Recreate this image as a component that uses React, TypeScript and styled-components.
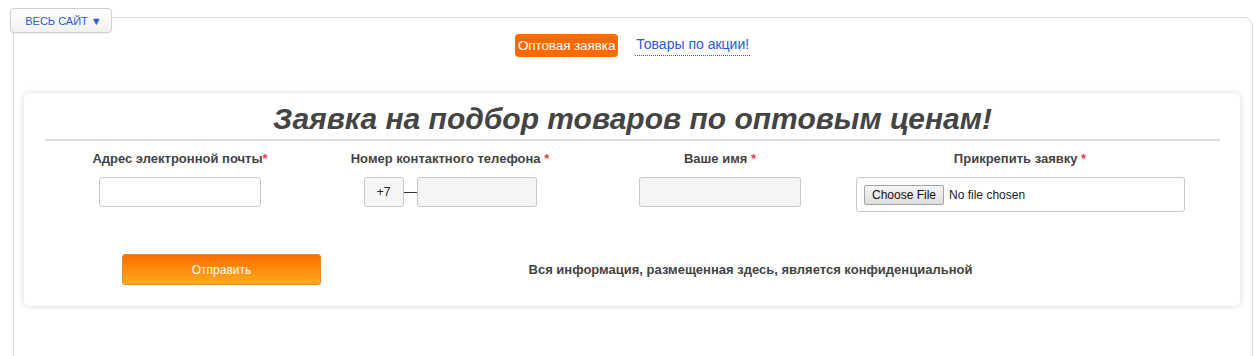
import styled, { createGlobalStyle } from "styled-components";

const Global = createGlobalStyle`
	html, body {
		margin: 0;
		padding: 0;
		background: #ffffff;
	}
	body {
		font-family: "Liberation Sans", Arial, sans-serif;
	}
`;

const Frame = styled.section`
	position: relative;
	margin: 17px 3px 0 13px;
	min-height: 339px;
	border: 1px solid #dcdcdc;
	border-bottom: none;
	border-top-right-radius: 9px;
	padding: 15px 12px 0 10px;
	box-sizing: border-box;
`;

const SiteTab = styled.button`
	position: absolute;
	top: -10px;
	left: -4px;
	width: 102px;
	height: 25px;
	border: 1px solid #cfcfcf;
	border-radius: 4px;
	background: linear-gradient(#ffffff, #f1f1f1);
	box-shadow: 0 1px 1px rgba(0, 0, 0, 0.06);
	color: #2a5bd7;
	font-family: "Liberation Sans", Arial, sans-serif;
	font-size: 11px;
	padding: 0 0 0 5px;
	cursor: pointer;
`;

const Switcher = styled.nav`
	display: flex;
	justify-content: center;
	align-items: center;
	gap: 17px;
	height: 24px;
	padding-left: 1px;
`;

const Pill = styled.span`
	display: inline-block;
	height: 23px;
	line-height: 23px;
	padding: 0 3px;
	border-radius: 4px;
	background: #ff6a00;
	color: #ffffff;
	font-size: 13.5px;
	letter-spacing: -0.1px;
`;

const Link = styled.a`
	color: #2a5bd7;
	font-size: 14px;
	text-decoration: none;
	border-bottom: 1px dotted #2a5bd7;
	padding: 0 1px 3px;
	margin-top: 2px;
	cursor: pointer;
`;

const Card = styled.div`
	margin-top: 36px;
	background: #ffffff;
	border-radius: 5px;
	box-shadow: 0 0 6px rgba(0, 0, 0, 0.16);
	padding: 0 20px 21px 21px;
`;

const Title = styled.h2`
	margin: 0;
	padding: 9px 0 4px;
	line-height: 33px;
	text-align: center;
	font-size: 30px;
	font-weight: 700;
	font-style: italic;
	color: #444444;
	border-bottom: 2px solid #dddddd;
`;

const Fields = styled.div`
	display: grid;
	grid-template-columns: 270px 270px 270px 330px;
	padding-top: 10px;
`;

const Field = styled.div`
	display: flex;
	flex-direction: column;
	align-items: center;
	gap: 10px;
`;

const Label = styled.label`
	font-size: 13px;
	font-weight: 700;
	line-height: 16px;
	color: #444444;
`;

const Star = styled.span`
	color: #f23b3b;
`;

const Input = styled.input<{ $grey?: boolean; $w?: number }>`
	width: ${(p) => p.$w ?? 162}px;
	height: 30px;
	box-sizing: border-box;
	border: 1px solid #c8c8c8;
	border-radius: 3px;
	background: ${(p) => (p.$grey ? "#f5f5f5" : "#ffffff")};
	padding: 0 6px;
	font-family: "Liberation Sans", Arial, sans-serif;
	font-size: 12px;
	outline: none;
`;

const PhoneGroup = styled.div`
	display: flex;
	align-items: center;
`;

const Prefix = styled.span`
	width: 40px;
	height: 30px;
	box-sizing: border-box;
	border: 1px solid #c8c8c8;
	border-radius: 3px;
	background: #f6f6f6;
	font-size: 12px;
	color: #222222;
	display: flex;
	align-items: center;
	justify-content: center;
`;

const Dash = styled.span`
	width: 13px;
	height: 1px;
	background: #333333;
`;

const FileBox = styled.div`
	width: 329px;
	height: 35px;
	box-sizing: border-box;
	border: 1px solid #c8c8c8;
	border-radius: 3px;
	background: #ffffff;
	display: flex;
	align-items: center;
	padding-left: 7px;
	margin-left: 1px;
	align-self: flex-start;

	input {
		font-family: "Liberation Sans", Arial, sans-serif;
		font-size: 12px;
		color: #222222;
	}

	input::file-selector-button {
		font-family: "Liberation Sans", Arial, sans-serif;
		font-size: 12px;
		color: #111111;
		height: 20px;
		padding: 0 7px;
		margin-right: 5px;
		border: 1px solid #a3a3a3;
		border-radius: 2px;
		background: linear-gradient(#f6f6f6, #dddddd);
	}
`;

const Bottom = styled.div`
	display: flex;
	align-items: center;
	margin-top: 42px;
`;

const Submit = styled.button`
	width: 199px;
	height: 31px;
	margin-left: 77px;
	border: 1px solid #e0892a;
	border-radius: 3px;
	background: linear-gradient(#ff6c00, #ffab1c);
	color: #ffffff;
	font-family: "Liberation Sans", Arial, sans-serif;
	font-size: 12px;
	cursor: pointer;
`;

const Note = styled.p`
	flex: 1;
	margin: 0;
	padding-right: 40px;
	text-align: center;
	font-size: 13px;
	font-weight: 700;
	color: #444444;
`;

const App = () => {
	return (
		<>
			<Global />
			<Frame>
				<SiteTab>ВЕСЬ САЙТ ▼</SiteTab>

				<Switcher>
					<Pill>Оптовая заявка</Pill>
					<Link>Товары по акции!</Link>
				</Switcher>

				<Card>
					<Title>Заявка на подбор товаров по оптовым ценам!</Title>

					<Fields>
						<Field>
							<Label>
								Адрес электронной почты<Star>*</Star>
							</Label>
							<Input type="email" />
						</Field>

						<Field>
							<Label>
								Номер контактного телефона <Star>*</Star>
							</Label>
							<PhoneGroup>
								<Prefix>+7</Prefix>
								<Dash />
								<Input type="tel" $grey $w={120} />
							</PhoneGroup>
						</Field>

						<Field>
							<Label>
								Ваше имя <Star>*</Star>
							</Label>
							<Input type="text" $grey />
						</Field>

						<Field>
							<Label>
								Прикрепить заявку <Star>*</Star>
							</Label>
							<FileBox>
								<input type="file" />
							</FileBox>
						</Field>
					</Fields>

					<Bottom>
						<Submit>Отправить</Submit>
						<Note>Вся информация, размещенная здесь, является конфиденциальной</Note>
					</Bottom>
				</Card>
			</Frame>
		</>
	);
};

export default App;
